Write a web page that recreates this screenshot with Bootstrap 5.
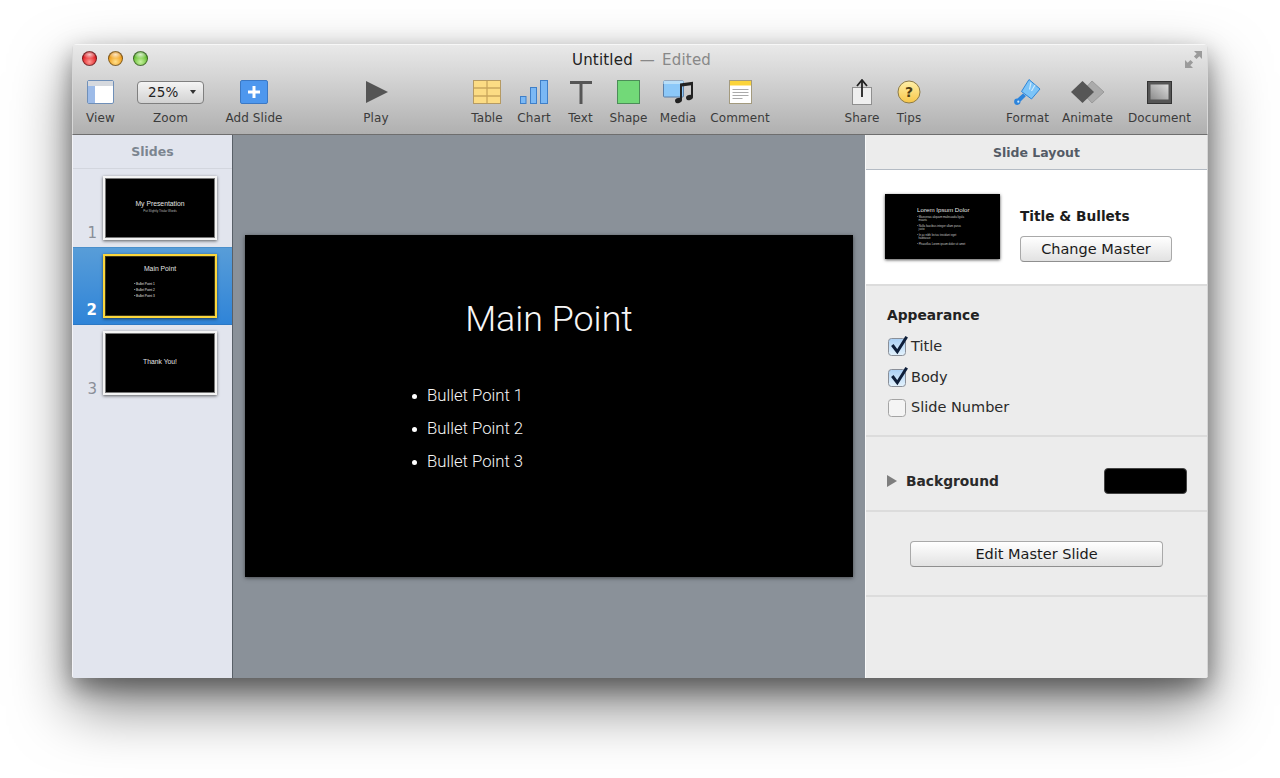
<!DOCTYPE html>
<html lang="en">
<head>
<meta charset="utf-8">
<title>Untitled</title>
<link href="https://cdn.jsdelivr.net/npm/bootstrap@5.3.0/dist/css/bootstrap.min.css" rel="stylesheet">
<style>
html,body{height:100%;margin:0;background:#fff;overflow:hidden}
body{font-family:"DejaVu Sans","Liberation Sans",sans-serif;color:#222}
.stage{padding:44px 72px 0}
.win{width:1136px;height:634px;border-radius:5px 5px 3px 3px;box-shadow:0 28px 60px rgba(0,0,0,.5),0 10px 25px rgba(0,0,0,.38);overflow:hidden;background:#ececec}
.tbar{height:91px;background:linear-gradient(#e9e9e9,#b0b0b0);border-top:1px solid #f7f7f7;border-bottom:1px solid #6e6e6e;border-left:1px solid #d8d8d8;border-right:1px solid #d8d8d8;flex:none}
.titlerow{height:28px;padding:0 4px 0 9px;display:grid;grid-template-columns:1fr auto 1fr;align-items:center}
.lights{gap:10.500px;padding-bottom:2px}
.lamp{width:15px;height:15px;border-radius:50%;border:1px solid rgba(0,0,0,.45)}
.lamp-r{background:radial-gradient(ellipse 55% 30% at 50% 20%,rgba(255,255,255,.75),transparent),radial-gradient(circle at 50% 75%,#ff9a94,#e2252a 60%,#b01015)}
.lamp-y{background:radial-gradient(ellipse 55% 30% at 50% 20%,rgba(255,255,255,.75),transparent),radial-gradient(circle at 50% 75%,#ffe08c,#f0a020 60%,#c07810)}
.lamp-g{background:radial-gradient(ellipse 55% 30% at 50% 20%,rgba(255,255,255,.75),transparent),radial-gradient(circle at 50% 75%,#c8f2a0,#6cc13a 60%,#3f8f20)}
.wintitle{font-size:15px;color:#222;letter-spacing:.2px;word-spacing:2px;padding:2px 2px 0 0}
.wintitle span{color:#888}
.fsicon{justify-self:end;display:block}
.tools{padding:6px 0 0 13px;height:62px}
.tool{display:flex;flex-direction:column;align-items:center;flex:none;font-size:12px;color:#3b3b3b;line-height:15px;letter-spacing:.1px;white-space:nowrap}
.tool-ico{height:26px;display:flex;align-items:center;justify-content:center;margin-bottom:6px}
.tool-ico svg{display:block}
.w-view{width:29px}.w-zoom{width:67px;margin-left:22px}.w-add{width:58px;margin-left:21px}
.w-play{width:24px;margin-left:81px}.w-table{width:32px;margin-left:83px}.w-chart{width:34px;margin-left:14px}
.w-text{width:27px;margin-left:16px}.w-shape{width:37px;margin-left:16px}.w-media{width:36px;margin-left:13px}
.w-comment{width:60px;margin-left:14px}.w-share{width:34px;margin-left:75px}.w-tips{width:26px;margin-left:17px}
.w-format{width:43px;margin-left:84px}.w-animate{width:51px;margin-left:13px}.w-doc{width:63px;margin-left:15px}
.zoombox{width:67px;height:23px;border:1px solid #7f7f7f;border-radius:4px;background:linear-gradient(#f4f4f4,#d2d2d2);font-size:13.500px;color:#222;padding:0 7px 0 10px}
.zoomcaret{width:0;height:0;border-left:3px solid transparent;border-right:3px solid transparent;border-top:4px solid #333}
.mainrow{height:543px;min-height:0}
.side{width:161px;flex:none;background:#e2e5ee;border-right:1px solid #596068;border-left:1px solid #f4f4f8}
.sidehead{height:34px;border-bottom:1px solid #d3d6de;font-size:12.500px;font-weight:700;color:#7c8590;line-height:33px;text-align:center}
.sliderow{height:78px;padding:6px 0 0 0}
.sliderow-on{background:linear-gradient(#589dd8,#2f84d8);border-top:1px solid #4a8fcb;border-bottom:1px solid #2c78c4}
.sliderow-plain{padding-top:7px}
.num{width:24px;text-align:right;font-size:15px;color:#8a8f98;line-height:16px;padding-bottom:6px}
.sliderow-on .num{color:#fff;font-weight:700}
.thumb{width:114px;height:64px;margin-left:6px;background:#000;border:2px solid #f4f4f4;outline:1px solid #777;outline-offset:-3px;box-shadow:0 1px 3px rgba(0,0,0,.6);color:#e8e8e8;font-family:"Liberation Sans",sans-serif;overflow:hidden}
.thumb-on{border:3px solid #fbd63c;outline-color:#3a3418}
.ttitle,.tsub,.tlist,.lt-title,.lt-line{opacity:.99}
.ttitle{font-size:6.800px;line-height:8px;text-align:center}
.ttitle-first{padding-top:22px}
.ttitle-last{padding-top:25px}
.tsub{font-size:3px;line-height:4px;text-align:center;color:#bbb;padding-top:1px}
.tlist{font-size:3.200px;line-height:6px;padding-left:28px;margin:0;list-style:none;color:#e8e8e8}
.canvasarea{flex:1;min-width:0;background:#8a9199;padding-bottom:2px}
.slide{width:608px;height:342px;background:#000;color:#f6f6f6;font-family:Roboto,"Liberation Sans",sans-serif;box-shadow:0 1px 4px rgba(0,0,0,.5)}
.slidetitle{font-size:35.800px;line-height:42px;padding-top:63px;text-align:center;font-weight:300}
.bullets{list-style:none;margin:0;padding:39px 0 0 167px;font-size:16.700px;line-height:33px;font-weight:300}
.bullets li::before{content:"";display:inline-block;width:5px;height:5px;border-radius:50%;background:#fff;margin-right:10px;vertical-align:2px}
.insp{width:343px;flex:none;background:#ececec;border-left:1px solid #fafafa;border-right:1px solid #d6d6d6}
.insphead{height:35px;border-bottom:1px solid #b4bbc4;font-size:12.500px;font-weight:700;color:#545b66;line-height:35px;text-align:center}
.sec{border-bottom:2px solid #dcdcdc}
.sec-master{height:116px;background:#fff;padding:24px 0 0 19px}
.layoutthumb{width:115px;height:65px;background:#000;box-shadow:0 1px 3px rgba(0,0,0,.7);color:#e8e8e8;font-family:"Liberation Sans",sans-serif;padding:12px 0 0 32px;overflow:hidden}
.lt-title{font-size:6.200px;line-height:8px;margin-bottom:2px}
.lt-line{font-size:2.800px;line-height:3.300px;color:#ccc;white-space:nowrap}
.lt-gap{margin-bottom:2.500px}
.master-info{padding:13px 0 0 20px}
.layoutname{font-size:13.700px;font-weight:700;color:#1c1c1c;line-height:18px;margin-bottom:11px}
.macbtn{display:block;padding:0;background:linear-gradient(#fff,#f2f2f2 45%,#e2e2e2);border:1px solid #a9a9a9;border-bottom-color:#8f8f8f;border-radius:4px;color:#1a1a1a;font-size:14.500px;line-height:24px;height:26px}
.macbtn:hover{background:linear-gradient(#fff,#f2f2f2 45%,#e2e2e2);color:#1a1a1a;border-color:#a9a9a9}
.btn-master{width:152px}
.sec-app{height:151px;padding:19px 0 0 21px}
.sectitle{font-size:13.800px;font-weight:700;color:#222;line-height:20px;margin-bottom:6px}
.chk{height:30.500px;font-size:14.500px;color:#2a2a2a;line-height:20px;gap:3px}
.chk svg{display:block;flex:none}
.sec-bg{height:75px;padding:15px 20px 0 21px}
.disc{width:0;height:0;border-left:10px solid #7e7e7e;border-top:6px solid transparent;border-bottom:6px solid transparent;margin-right:9px}
.bgname{font-size:13.800px;font-weight:700;color:#2a2a2a}
.swatch{width:83px;height:26px;background:#000;border:1px solid #444;border-radius:4px}
.sec-edit{height:85px;padding-top:29px;padding-left:44px}
.btn-edit{width:253px}
</style>
</head>
<body>
<div class="stage">
<div class="win d-flex flex-column">
  <header class="tbar">
    <div class="titlerow">
      <div class="lights d-flex"><div class="lamp lamp-r"></div><div class="lamp lamp-y"></div><div class="lamp lamp-g"></div></div>
      <div class="wintitle">Untitled <span>— Edited</span></div>
      <svg class="fsicon" width="19" height="19" viewBox="0 0 19 19"><path d="M18 1v8l-2.700-2.700-2.800 2.800-2.600-2.600 2.800-2.800L10 1zM1 18v-8l2.700 2.700 2.800-2.800 2.600 2.600-2.800 2.800L9 18z" fill="#9b9b9b"/></svg>
    </div>
    <div class="tools d-flex">
      <div class="tool w-view"><div class="tool-ico"><svg width="29" height="24" viewBox="0 0 29 24"><rect x="1.500" y=".5" width="26" height="23" rx="1.500" fill="#fff" stroke="#6f8fb8"/><rect x="2" y="1" width="25" height="5" fill="#d6d9de"/><rect x="2" y="6" width="7" height="17" fill="#9dbbe8"/></svg></div><span>View</span></div>
      <div class="tool w-zoom"><div class="tool-ico"><div class="zoombox d-flex align-items-center justify-content-between"><span>25%</span><span class="zoomcaret"></span></div></div><span>Zoom</span></div>
      <div class="tool w-add"><div class="tool-ico"><svg width="28" height="24" viewBox="0 0 28 24"><rect x=".5" y=".5" width="27" height="23" rx="1.500" fill="#4d97ee" stroke="#3b78c4"/><path d="M12.500 6h3v4.500H20v3h-4.500V18h-3v-4.500H8v-3h4.500z" fill="#fff"/></svg></div><span>Add Slide</span></div>
      <div class="tool w-play"><div class="tool-ico"><svg width="24" height="24" viewBox="0 0 24 24"><path d="M2 1l22 11L2 23z" fill="#555"/></svg></div><span>Play</span></div>
      <div class="tool w-table"><div class="tool-ico"><svg width="28" height="24" viewBox="0 0 28 24"><rect x=".5" y=".5" width="27" height="23" fill="#fcdc84" stroke="#b59a63"/><path d="M14 1v22M1 8h26M1 16h26" stroke="#c9a65c" stroke-width="1.300"/></svg></div><span>Table</span></div>
      <div class="tool w-chart"><div class="tool-ico"><svg width="28" height="24" viewBox="0 0 28 24"><g fill="#7ab8f5" stroke="#3f7fc8"><rect x=".5" y="16.500" width="5.500" height="7"/><rect x="10.500" y="7.500" width="6" height="16"/><rect x="20.500" y=".5" width="7" height="23"/></g></svg></div><span>Chart</span></div>
      <div class="tool w-text"><div class="tool-ico"><svg width="24" height="24" viewBox="0 0 24 24"><path d="M1 1h22v3H13.500v20h-3V4H1z" fill="#565656"/></svg></div><span>Text</span></div>
      <div class="tool w-shape"><div class="tool-ico"><svg width="23" height="24" viewBox="0 0 23 24"><rect x=".5" y=".5" width="22" height="23" fill="#72d978" stroke="#4c8d58"/></svg></div><span>Shape</span></div>
      <div class="tool w-media"><div class="tool-ico"><svg width="32" height="26" viewBox="0 0 32 26"><rect x="1.500" y="2" width="20" height="16" rx="1" fill="#8cc8f8" stroke="#5b7fa8"/><rect x="1.500" y="2" width="20" height="3" fill="#b8def8"/><g fill="#222"><path d="M18 4.500l13-1.800v3.300l-13 1.800z"/><rect x="18" y="5" width="2" height="16"/><rect x="29" y="3" width="2" height="15"/><ellipse cx="16.500" cy="21.500" rx="3.500" ry="2.600" transform="rotate(-15 16.500 21.500)"/><ellipse cx="27.500" cy="18.500" rx="3.500" ry="2.600" transform="rotate(-15 27.500 18.500)"/></g></svg></div><span>Media</span></div>
      <div class="tool w-comment"><div class="tool-ico"><svg width="23" height="24" viewBox="0 0 23 24"><rect x=".5" y=".5" width="22" height="23" fill="#fff" stroke="#a39a7e"/><rect x="1" y="1" width="21" height="4.500" fill="#fbd43a"/><path d="M3.500 9.500h16M3.500 12.500h16M3.500 15.500h16M3.500 18.500h10" stroke="#aaa"/></svg></div><span>Comment</span></div>
      <div class="tool w-share"><div class="tool-ico"><svg width="20" height="26" viewBox="0 0 20 26"><rect x=".5" y="8.500" width="19" height="17" fill="#efefef" stroke="#8f8f8f"/><path d="M10 1.500V18" stroke="#222" stroke-width="1.800" fill="none"/><path d="M5 7l5-6 5 6" stroke="#222" stroke-width="1.800" fill="none"/></svg></div><span>Share</span></div>
      <div class="tool w-tips"><div class="tool-ico"><svg width="24" height="24" viewBox="0 0 24 24"><defs><linearGradient id="tipg" x1="0" y1="0" x2="0" y2="1"><stop offset="0" stop-color="#fff0a8"/><stop offset="1" stop-color="#f7c648"/></linearGradient></defs><circle cx="12" cy="12" r="11" fill="url(#tipg)" stroke="#8c7a48"/><text x="12" y="17" text-anchor="middle" font-family="DejaVu Sans" font-weight="700" font-size="14" fill="#4c3d14">?</text></svg></div><span>Tips</span></div>
      <div class="tool w-format"><div class="tool-ico"><svg width="28" height="28" viewBox="0 0 28 28"><path d="M15 1.500l11 9.500-8.500 10-10-7.500z" fill="#7cc4f8" stroke="#2f86d8"/><path d="M17 4.500l-1.500 7M21 7l-3.500 6" stroke="#cfe9fc" stroke-width="1.200"/><path d="M9 15.500l3 2.500-5.500 5.500a3.200 3.200 0 1 1-3-3z" fill="#2c84dc"/><circle cx="4.300" cy="23.700" r="1.100" fill="#cfe9fc"/></svg></div><span>Format</span></div>
      <div class="tool w-animate"><div class="tool-ico"><svg width="35" height="24" viewBox="0 0 35 24"><path d="M22 1l12 11-12 11-10-11z" fill="#ababab" stroke="#9a9a9a"/><path d="M12.500 1L24 12 12.500 23 1 12z" fill="#565656"/></svg></div><span>Animate</span></div>
      <div class="tool w-doc"><div class="tool-ico"><svg width="25" height="23" viewBox="0 0 25 23"><defs><linearGradient id="docg" x1="1" y1="0" x2="0" y2="1"><stop offset="0" stop-color="#dcdcdc"/><stop offset="1" stop-color="#8c8c8c"/></linearGradient></defs><rect x=".5" y=".5" width="24" height="22" fill="#555" stroke="#333"/><rect x="3.500" y="3.500" width="18" height="15" fill="url(#docg)"/></svg></div><span>Document</span></div>
    </div>
  </header>
  <div class="mainrow d-flex">
    <aside class="side">
      <div class="sidehead">Slides</div>
      <div class="sliderow sliderow-plain d-flex align-items-start">
        <div class="num align-self-end">1</div>
        <div class="thumb"><div class="ttitle ttitle-first">My Presentation</div><div class="tsub">Put Slightly Titular Words</div></div>
      </div>
      <div class="sliderow sliderow-on d-flex align-items-start">
        <div class="num align-self-end">2</div>
        <div class="thumb thumb-on"><div class="ttitle pt-2">Main Point</div><ul class="tlist mt-2"><li>• Bullet Point 1</li><li>• Bullet Point 2</li><li>• Bullet Point 3</li></ul></div>
      </div>
      <div class="sliderow d-flex align-items-start">
        <div class="num align-self-end">3</div>
        <div class="thumb"><div class="ttitle ttitle-last">Thank You!</div></div>
      </div>
    </aside>
    <main class="canvasarea d-flex align-items-center justify-content-center">
      <section class="slide">
        <h1 class="slidetitle m-0">Main Point</h1>
        <ul class="bullets"><li>Bullet Point 1</li><li>Bullet Point 2</li><li>Bullet Point 3</li></ul>
      </section>
    </main>
    <aside class="insp">
      <div class="insphead">Slide Layout</div>
      <div class="sec sec-master d-flex">
        <div class="layoutthumb flex-shrink-0">
          <div class="lt-title">Lorem Ipsum Dolor</div>
          <div class="lt-line">• Maecenas aliquam malesuada ligula</div>
          <div class="lt-line lt-gap">&nbsp;&nbsp;mauris</div>
          <div class="lt-line">• Nulla faucibus integer ullam purus</div>
          <div class="lt-line lt-gap">&nbsp;&nbsp;justo</div>
          <div class="lt-line">• In ac nibh lectus tincidunt eget</div>
          <div class="lt-line lt-gap">&nbsp;&nbsp;habitasse</div>
          <div class="lt-line">• Phasellus Lorem ipsum dolor sit amet</div>
        </div>
        <div class="master-info">
          <div class="layoutname">Title &amp; Bullets</div>
          <button type="button" class="btn macbtn btn-master">Change Master</button>
        </div>
      </div>
      <div class="sec sec-app">
        <div class="sectitle">Appearance</div>
        <div class="chk d-flex align-items-center"><svg width="21" height="22" viewBox="0 0 21 22"><defs><linearGradient id="cbg" x1="0" y1="0" x2="0" y2="1"><stop offset="0" stop-color="#a9cff5"/><stop offset="1" stop-color="#e4f2fc"/></linearGradient></defs><rect x="1.500" y="3.500" width="17" height="17" rx="3" fill="url(#cbg)" stroke="#8a8f98"/><path d="M5.300 10l5 6.700 9.400-15" fill="none" stroke="#0e1e3a" stroke-width="3"/></svg><span>Title</span></div>
        <div class="chk d-flex align-items-center"><svg width="21" height="22" viewBox="0 0 21 22"><rect x="1.500" y="3.500" width="17" height="17" rx="3" fill="url(#cbg)" stroke="#8a8f98"/><path d="M5.300 10l5 6.700 9.400-15" fill="none" stroke="#0e1e3a" stroke-width="3"/></svg><span>Body</span></div>
        <div class="chk d-flex align-items-center"><svg width="21" height="22" viewBox="0 0 21 22"><rect x="1.500" y="3.500" width="17" height="17" rx="3" fill="#f4f4f4" stroke="#a4a4a4"/></svg><span>Slide Number</span></div>
      </div>
      <div class="sec sec-bg d-flex align-items-center">
        <div class="disc"></div>
        <div class="bgname flex-grow-1">Background</div>
        <div class="swatch"></div>
      </div>
      <div class="sec sec-edit">
        <button type="button" class="btn macbtn btn-edit">Edit Master Slide</button>
      </div>
    </aside>
  </div>
</div>
</div>
</body>
</html>
